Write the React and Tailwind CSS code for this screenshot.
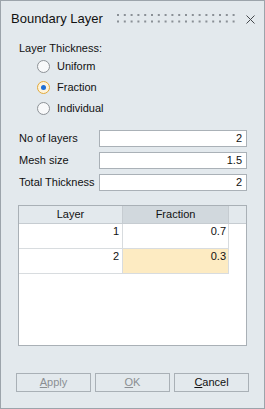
import React, { useState } from "react";

const FONT = { fontFamily: '"Liberation Sans", Arial, sans-serif' };

function Grip() {
  const cols = Array.from({ length: 18 }, (_, i) => i);
  return (
    <svg width="118" height="10" viewBox="0 0 118 10" className="block">
      {cols.map((i) => (
        <g key={i} fill="#8a9096">
          <rect x={i * 6.8} y={0} width="2" height="2" />
          <rect x={i * 6.8} y={6.5} width="2" height="2" />
        </g>
      ))}
    </svg>
  );
}

function Radio({ label, checked, onClick }) {
  return (
    <div className="flex items-center h-[21px] cursor-default" onClick={onClick}>
      {checked ? (
        <span className="w-[13px] h-[13px] rounded-full border border-[#e2a93a] bg-[#fdf3dc] flex items-center justify-center">
          <span className="w-[5px] h-[5px] rounded-full bg-[#1e6fd6]" />
        </span>
      ) : (
        <span className="w-[13px] h-[13px] rounded-full border border-[#8d9297] bg-[#f8f9fa]" />
      )}
      <span className="ml-[7px] text-[11px] text-[#111] leading-[15px]">{label}</span>
    </div>
  );
}

function Field({ label, value }) {
  return (
    <div className="flex items-center h-[17px]">
      <span className="w-[80px] text-[11px] text-[#111] leading-[15px]">{label}</span>
      <div className="w-[148px] h-[17px] border border-[#aab1b7] bg-white flex items-center justify-end pr-[4px] text-[11px] text-[#111]">
        {value}
      </div>
    </div>
  );
}

function Button({ children, disabled }) {
  return (
    <div
      className={
        "h-[19px] border border-[#a9b0b6] bg-[#e3e9ed] flex items-center justify-center text-[11px] " +
        (disabled ? "text-[#8b8f93]" : "text-[#111]")
      }
    >
      {children}
    </div>
  );
}

export default function App() {
  const [mode, setMode] = useState("Fraction");
  const rows = [
    { layer: "1", fraction: "0.7" },
    { layer: "2", fraction: "0.3" },
  ];

  return (
    <div style={FONT} className="w-[265px] h-[409px] border border-[#9ca4ab] bg-[#e3e9ed] flex flex-col">
      {/* title bar */}
      <div className="h-[36px] flex items-center pl-[10px]">
        <span className="text-[13px] text-[#111] w-[106px]">Boundary Layer</span>
        <Grip />
        <svg width="9" height="9" viewBox="0 0 9 9" className="ml-[11px]">
          <path d="M0.5 0.5 L8.5 8.5 M8.5 0.5 L0.5 8.5" stroke="#45494d" strokeWidth="1" />
        </svg>
      </div>

      <div className="pl-[17px]">
        <div className="mt-[4px] text-[11px] leading-[15px] text-[#111] pl-[1px]">Layer Thickness:</div>
        <div className="pl-[19px]">
          {["Uniform", "Fraction", "Individual"].map((m) => (
            <Radio key={m} label={m} checked={mode === m} onClick={() => setMode(m)} />
          ))}
        </div>

        <div className="mt-[11px] flex flex-col gap-[5px] pl-[1px]">
          <Field label="No of layers" value="2" />
          <Field label="Mesh size" value="1.5" />
          <Field label="Total Thickness" value="2" />
        </div>

        {/* grid */}
        <div className="mt-[14px] w-[229px] h-[141px] border border-[#a9b0b6] bg-white text-[11px] text-[#111]">
          <div className="flex h-[18px] bg-[#e3e9ed] border-b border-[#c6ccd1]">
            <div className="w-[104px] border-r border-[#c6ccd1] flex items-center justify-center">Layer</div>
            <div className="w-[106px] bg-[#d1d8dd] border-r border-[#c6ccd1] flex items-center justify-center">
              Fraction
            </div>
          </div>
          {rows.map((r, i) => (
            <div key={r.layer} className="flex h-[25px]">
              <div className="w-[104px] border-r border-b border-[#d8dcdf] text-right pr-[3px] leading-[15px]">
                {r.layer}
              </div>
              <div
                className={
                  "w-[106px] border-r border-b border-[#d8dcdf] text-right pr-[2px] leading-[15px] " +
                  (i === 1 ? "bg-[#fdebc2]" : "bg-white")
                }
              >
                {r.fraction}
              </div>
            </div>
          ))}
        </div>
      </div>

      {/* buttons */}
      <div className="mt-[27px] pl-[15px] flex gap-[4px]">
        <div className="w-[75px]">
          <Button disabled>
            <u>A</u>pply
          </Button>
        </div>
        <div className="w-[75px]">
          <Button disabled>
            <u>O</u>K
          </Button>
        </div>
        <div className="w-[75px]">
          <Button>
            <u>C</u>ancel
          </Button>
        </div>
      </div>
    </div>
  );
}
